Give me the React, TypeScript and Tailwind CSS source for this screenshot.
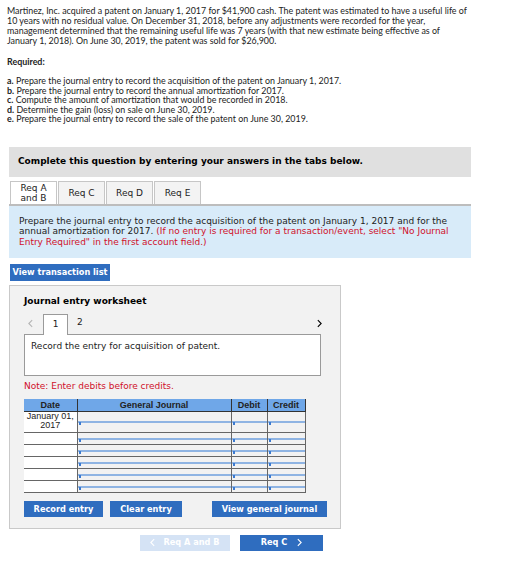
import React, { useState } from 'react';

const tabs = ['Req A\nand B', 'Req C', 'Req D', 'Req E'];

const steps = [
  'Prepare the journal entry to record the acquisition of the patent on January 1, 2017.',
  'Prepare the journal entry to record the annual amortization for 2017.',
  'Compute the amount of amortization that would be recorded in 2018.',
  'Determine the gain (loss) on sale on June 30, 2019.',
  'Prepare the journal entry to record the sale of the patent on June 30, 2019.',
];

const ChevronLeft = ({ className }: { className?: string }) => (
  <svg viewBox="0 0 6 10" className={className} fill="none" stroke="currentColor" strokeWidth="1.3">
    <path d="M5 1 1 5l4 4" />
  </svg>
);

const ChevronRight = ({ className }: { className?: string }) => (
  <svg viewBox="0 0 6 10" className={className} fill="none" stroke="currentColor" strokeWidth="1.3">
    <path d="M1 1l4 4-4 4" />
  </svg>
);

// input cell with the little blue focus marker in the corner
const Cell = () => (
  <td className="border border-[#666] p-0">
    <div className="relative h-full w-full border border-[#8fb4e3] bg-white">
      <span className="absolute left-0 top-0 h-[3px] w-[2px] bg-[#3b7ad0]" />
    </div>
  </td>
);

export default function App() {
  const [active] = useState(0);

  return (
    <div className="w-[513px] h-[562px] bg-white pt-[6px] text-[#222]">
      <div className="px-[7px] text-[8.9px] leading-[10px] font-['Lato','Liberation_Sans',sans-serif]">
        <p>
          Martinez, Inc. acquired a patent on January 1, 2017 for $41,900 cash. The patent was estimated to have a useful life of
          <br />
          10 years with no residual value. On December 31, 2018, before any adjustments were recorded for the year,
          <br />
          management determined that the remaining useful life was 7 years (with that new estimate being effective as of
          <br />
          January 1, 2018). On June 30, 2019, the patent was sold for $26,900.
        </p>
        <p className="mt-[11px] font-bold">Required:</p>
        <ul className="mt-[9px] leading-[9.5px]">
          {steps.map((s, i) => (
            <li key={i}>
              <span className="font-bold">{'abcde'[i]}.</span> {s}
            </li>
          ))}
        </ul>
      </div>

      <div className="ml-[9px] w-[462px] mt-[23px] font-['DejaVu_Sans','Verdana',sans-serif]">
        <div className="h-[30px] bg-[#e0e0e0] flex items-center pl-[9px] text-[9px] font-bold text-black">
          Complete this question by entering your answers in the tabs below.
        </div>

        <div className="mt-[4px] flex pl-[1px] border-b-[2px] border-[#bdbdbd]">
          {tabs.map((t, i) => (
            <div
              key={t}
              className={`w-[47px] h-[23px] mr-[1px] flex items-center justify-center text-center whitespace-pre-line text-[9px] leading-[10px] border border-b-0 border-[#c6c6c6] ${
                i === active ? 'bg-white' : 'bg-[#f3f3f3]'
              }`}
            >
              {t}
            </div>
          ))}
        </div>

        <div className="bg-[#d8ebf9] h-[52px] pl-[10px] pt-[10px] text-[9px] leading-[10.7px] text-[#222]">
          Prepare the journal entry to record the acquisition of the patent on January 1, 2017 and for the
          <br />
          annual amortization for 2017.{' '}
          <span className="text-[#d0102a]">
            (If no entry is required for a transaction/event, select "No Journal
            <br />
            Entry Required" in the first account field.)
          </span>
        </div>

        <div className="mt-[6px] ml-[1px] w-[100px] h-[17px] bg-[#2f6dbf] text-white text-[8.2px] font-bold whitespace-nowrap flex items-center justify-center">
          View transaction list
        </div>

        <div className="mt-[4px] w-[332px] h-[244px] bg-[#f2f2f2] border border-[#c9c9c9] pl-[14px] pt-[9px]">
          <div className="text-[9px] font-bold text-black">Journal entry worksheet</div>

          <div className="mt-[6px] flex items-end h-[20px] w-[297px]">
            <ChevronLeft className="w-[5px] h-[9px] text-[#b5b5b5] ml-[4px] mb-[6px]" />
            <div className="ml-[10px] w-[25px] h-[21px] bg-white border border-b-0 border-[#9a9a9a] flex items-center justify-center text-[9px] relative top-[1px]">
              1
            </div>
            <div className="ml-[9px] mb-[5px] text-[9px]">2</div>
            <ChevronRight className="w-[5px] h-[9px] text-black ml-auto mb-[6px] mr-[-1px]" />
          </div>

          <div className="w-[297px] h-[42px] bg-white border border-[#9a9a9a] pl-[6px] pt-[5px] text-[9px]">
            Record the entry for acquisition of patent.
          </div>

          <div className="mt-[4px] text-[9px] text-[#d0102a]">Note: Enter debits before credits.</div>

          <table className="mt-[5px] border-collapse font-['Liberation_Sans',Arial,sans-serif] text-[9px] text-[#222]">
            <thead>
              <tr className="h-[13px] bg-[#6fa7e8] font-bold">
                <th className="w-[53px] border-b border-[#333] p-0 leading-[12px]">Date</th>
                <th className="w-[154px] border-x border-b border-[#333] p-0 leading-[12px]">General Journal</th>
                <th className="w-[36px] border-b border-[#333] p-0 leading-[12px]">Debit</th>
                <th className="w-[38px] border-x border-b border-[#333] p-0 leading-[12px]">Credit</th>
              </tr>
            </thead>
            <tbody>
              <tr className="h-[21px]">
                <td className="border-b border-[#666] bg-white p-0 text-center align-top leading-[9px]">
                  January 01,
                  <br />
                  2017
                </td>
                <Cell />
                <Cell />
                <Cell />
              </tr>
              {[0, 1, 2, 3, 4].map((r) => (
                <tr key={r} className="h-[12px]">
                  <td className="border-b border-[#666] bg-white p-0" />
                  <Cell />
                  <Cell />
                  <Cell />
                </tr>
              ))}
            </tbody>
          </table>

          <div className="mt-[8px] flex text-[8.2px] font-bold text-white w-[303px]">
            <div className="w-[79px] h-[16px] bg-[#2f6dbf] flex items-center justify-center">Record entry</div>
            <div className="ml-[7px] w-[72px] h-[16px] bg-[#2f6dbf] flex items-center justify-center">Clear entry</div>
            <div className="ml-auto w-[115px] h-[16px] bg-[#2f6dbf] flex items-center justify-center">View general journal</div>
          </div>
        </div>

        <div className="mt-[6px] flex text-[8.2px] font-bold">
          <div className="ml-[131px] w-[90px] h-[16px] bg-[#d5e3f5] text-white flex items-center justify-center gap-[8px]">
            <ChevronLeft className="w-[5px] h-[9px]" />
            Req A and B
          </div>
          <div className="ml-[10px] w-[83px] h-[16px] bg-[#2f6dbf] text-white flex items-center justify-center gap-[10px]">
            Req C
            <ChevronRight className="w-[5px] h-[9px]" />
          </div>
        </div>
      </div>
    </div>
  );
}
